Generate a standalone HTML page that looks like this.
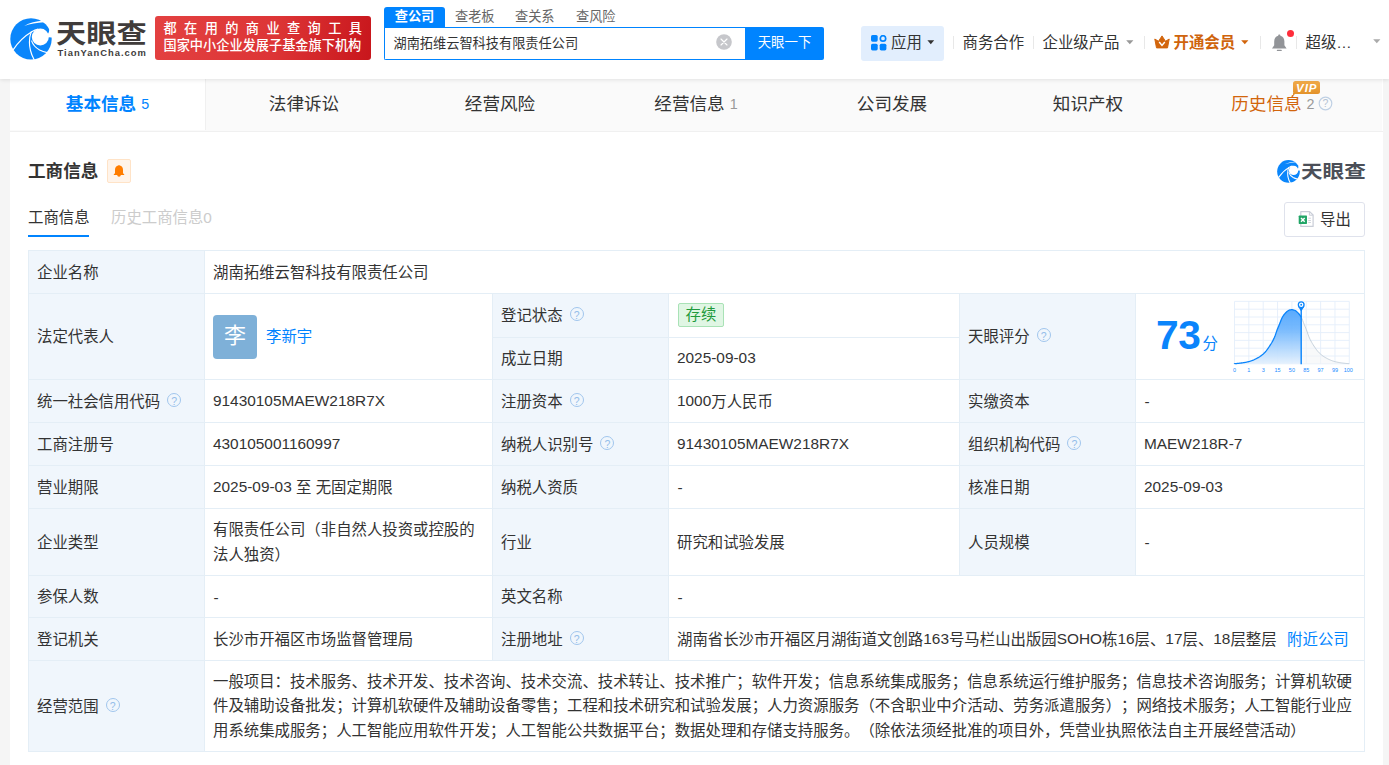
<!DOCTYPE html>
<html lang="zh-CN">
<head>
<meta charset="utf-8">
<title>湖南拓维云智科技有限责任公司 - 天眼查</title>
<style>
*{box-sizing:border-box;margin:0;padding:0}
html,body{width:1389px;height:765px;overflow:hidden}
body{text-spacing-trim:space-all;position:relative;background:#f5f5f5;color:#333;font-family:"Liberation Sans","Noto Sans CJK SC",sans-serif;font-size:15.4px}
.abs{position:absolute}
.t{position:absolute;white-space:nowrap;line-height:20px;height:20px;margin-top:.5px}
#header{position:absolute;left:0;top:0;width:1389px;height:79px;background:#fff;box-shadow:0 1px 4px rgba(0,0,0,.10);z-index:5}
#main{position:absolute;left:10px;top:79px;width:1373px;height:686px;background:#fff}
/* nav tabs */
#tabs{position:absolute;left:10px;top:79px;width:1372px;height:53px;background:#fafafa}
#tabs:after{content:"";position:absolute;left:0;top:52px;width:1373px;height:1px;background:#f0f0f0}
.tab{position:absolute;top:-1.3px;height:52px;width:196px;display:flex;align-items:center;justify-content:center;font-size:17.6px;color:#333;white-space:nowrap;line-height:24px}
.tab small{font-size:14.3px;color:#999;margin-left:5px;font-weight:normal}
.tab.on{background:#fff;color:#0084ff;font-weight:bold;border-right:1px solid #f0f0f0}
.tab.on small{color:#0084ff}
/* table cells */
.c{position:absolute;border-right:1px solid #e4eef6;border-bottom:1px solid #e4eef6;display:flex;align-items:center;padding:1px 8px 0 8px;line-height:24px;font-size:15.4px;color:#333;white-space:nowrap}
.c.l{background:#f0f6fc}
.q{display:inline-block;width:14px;height:14px;margin-left:7px;flex:none}
a{color:#0084ff;text-decoration:none}
.sep{position:absolute;top:36px;width:1px;height:13px;background:#e8e8e8}
.c{border:none;border-left:1px solid #e4eef6;border-top:1px solid #e4eef6}
.q{position:relative;top:-2px;display:inline-block;width:14px;height:14px;border:1.3px solid #a1c6ed;border-radius:50%;font-size:10.5px;line-height:14.4px;text-align:center;color:#94bdea;margin-left:7px;flex:none;font-family:"Liberation Sans",sans-serif}
.av{display:inline-block;width:44px;height:44px;border-radius:4px;background:#7eb0d8;color:#fff;font-size:22px;line-height:42px;text-align:center;flex:none}
.tag{position:relative;top:-1px;left:1px;display:inline-block;height:24px;line-height:22px;padding:0 6.6px;border:1px solid #a9e2b6;border-radius:2px;background:#e0f6e4;color:#1f9a3d;font-size:15.4px}
.c span.ml{line-height:24.2px;display:block}
.n{position:relative;top:-1px}
.w{display:block;white-space:nowrap}
.hy{position:relative;top:.5px;left:.6px}
</style>
</head>
<body>
<div id="main"></div>
<div id="header">
<!-- logo -->
<svg class="abs" style="left:10px;top:17.5px" width="42" height="42" viewBox="0 0 42 42">
<circle cx="21" cy="20.9" r="20.7" fill="#0a86fb"/>
<circle cx="30.3" cy="19" r="8.5" fill="#fff"/>
<path d="M39.5 10.2 Q39.4 14 37.3 17.3 L35.8 19.1 L41.8 19.4 L44.6 19 L44.6 10 Z" fill="#fff"/>
<path d="M3.1 31.8 C8 24.5 14.5 18 22.2 13.5 C24 12.4 26 11.7 28.2 11.2" fill="none" stroke="#fff" stroke-width="1.2"/>
<path d="M21.4 13.4 C19.1 19.5 19.1 27 20.5 32.5 C21.3 36 22.6 39 24.4 42.2" fill="none" stroke="#fff" stroke-width="1.15"/>
<path d="M21.5 22.6 C22.8 26.5 25.5 29.6 29.6 32 C32 33.3 34.5 34.1 37.2 34.6" fill="none" stroke="#fff" stroke-width="1.15"/>
<path d="M14.2 7.9 C19.5 5 26 3.3 33.5 2.6 L34.2 4.3 C27 4.6 20 6 14.2 7.9 Z" fill="#fff"/>
</svg>
<div class="abs" style="left:55.5px;top:14px;height:36px;line-height:36px;font-size:25.6px;font-weight:700;color:#403c3b;letter-spacing:0;font-family:'Noto Sans CJK SC',sans-serif;white-space:nowrap;transform:scaleX(1.18);transform-origin:0 0">天眼查</div>
<div class="abs" style="left:57.5px;top:46.5px;height:12px;line-height:12px;font-size:9.4px;font-weight:bold;color:#403c3b;letter-spacing:1px;white-space:nowrap">TianYanCha.com</div>
<!-- red banner -->
<div class="abs" style="left:155px;top:16px;width:216px;height:44px;border-radius:3px;background:linear-gradient(100deg,#e34141 0%,#dd3536 55%,#c8161c 100%);color:#fff;font-size:13.2px;white-space:nowrap">
<div class="abs" style="left:8.5px;top:4.5px;height:16px;line-height:16px;letter-spacing:7.4px;font-weight:500">都在用的商业查询工具</div>
<div class="abs" style="left:8.5px;top:22px;height:16px;line-height:16px;font-weight:500">国家中小企业发展子基金旗下机构</div>
</div>
<!-- search -->
<div class="abs" style="left:384px;top:7px;width:61px;height:20px;background:#0084ff;color:#fff;font-size:13.2px;font-weight:bold;line-height:19px;text-align:center;border-radius:3px 3px 0 0">查公司</div>
<div class="abs" style="left:455px;top:7px;height:20px;line-height:19px;font-size:13.2px;color:#666;white-space:nowrap">查老板</div>
<div class="abs" style="left:515px;top:7px;height:20px;line-height:19px;font-size:13.2px;color:#666;white-space:nowrap">查关系</div>
<div class="abs" style="left:576px;top:7px;height:20px;line-height:19px;font-size:13.2px;color:#666;white-space:nowrap">查风险</div>
<div class="abs" style="left:384px;top:27px;width:362px;height:33px;border:1px solid #0084ff;border-right:none;background:#fff;border-radius:0 0 0 2px"></div>
<div class="abs" style="left:393.5px;top:34px;height:20px;line-height:20px;font-size:13.2px;color:#333;white-space:nowrap">湖南拓维云智科技有限责任公司</div>
<svg class="abs" style="left:715.7px;top:34.2px" width="16" height="16" viewBox="0 0 16 16"><circle cx="8" cy="8" r="7.8" fill="#c6c7cb"/><path d="M5 5 L11 11 M11 5 L5 11" stroke="#fff" stroke-width="1.15" stroke-linecap="round"/></svg>
<div class="abs" style="left:745px;top:27px;width:79px;height:33px;background:#0084ff;color:#fff;font-size:13.4px;line-height:32px;text-align:center;border-radius:0 2px 2px 0">天眼一下</div>
<!-- right nav -->
<div class="abs" style="left:861px;top:26px;width:83px;height:34.5px;background:#e2eefd;border-radius:3px"></div>
<svg class="abs" style="left:870.5px;top:35px" width="16" height="16" viewBox="0 0 16 16"><rect x="0" y="0" width="6.7" height="6.7" rx="1.6" fill="#0084ff"/><rect x="0" y="8.7" width="6.7" height="6.7" rx="1.6" fill="#0084ff"/><rect x="8.7" y="8.7" width="6.7" height="6.7" rx="1.6" fill="#0084ff"/><circle cx="12" cy="3.4" r="2.7" fill="none" stroke="#0084ff" stroke-width="1.7"/></svg>
<div class="t" style="left:891px;top:32.5px">应用</div>
<svg class="abs" style="left:927px;top:40px" width="8" height="5" viewBox="0 0 8 5"><path d="M.4 .3 H7.2 L3.8 4.2 Z" fill="#333"/></svg>
<div class="sep" style="left:953px"></div>
<div class="t" style="left:962.5px;top:32.5px">商务合作</div>
<div class="sep" style="left:1033px"></div>
<div class="t" style="left:1042.5px;top:32.5px">企业级产品</div>
<svg class="abs" style="left:1125.5px;top:40px" width="8" height="5" viewBox="0 0 8 5"><path d="M.2 .3 H7.4 L3.8 4.2 Z" fill="#999"/></svg>
<div class="sep" style="left:1144px"></div>
<svg class="abs" style="left:1154px;top:34.6px" width="16" height="14" viewBox="0 0 16 14"><path d="M.8 4 L4.5 6.3 L8 .9 L11.5 6.3 L15.2 4 L13.5 12.9 H2.5 Z" fill="#d2650c" stroke="#d2650c" stroke-width="1" stroke-linejoin="round"/><path d="M5.2 7 L8 10.4 L10.8 7" fill="none" stroke="#fff" stroke-width="1.5"/></svg>
<div class="t" style="left:1173.5px;top:32.5px;font-weight:bold;color:#cf640d">开通会员</div>
<svg class="abs" style="left:1240.5px;top:40px" width="8" height="5" viewBox="0 0 8 5"><path d="M.2 .3 H7.4 L3.8 4.2 Z" fill="#d2650c"/></svg>
<div class="sep" style="left:1260px"></div>
<svg class="abs" style="left:1271px;top:33.5px" width="17" height="18" viewBox="0 0 17 18"><path d="M8.3 .6 C9 .6 9.4 1.1 9.4 1.8 C12 2.5 13.4 4.6 13.4 7.4 V11.2 L15.6 14.4 H1 L3.2 11.2 V7.4 C3.2 4.6 4.6 2.5 7.2 1.8 C7.2 1.1 7.6 .6 8.3 .6 Z" fill="#929498"/><rect x="5.8" y="15.8" width="5" height="1.3" rx=".6" fill="#929498"/></svg>
<div class="abs" style="left:1286.7px;top:29.8px;width:7.4px;height:7.4px;border-radius:50%;background:#ff2d3b"></div>
<div class="sep" style="left:1296px"></div>
<div class="t" style="left:1305.5px;top:32.5px">超级…</div>
<svg class="abs" style="left:1372.5px;top:39px" width="8" height="5" viewBox="0 0 8 5"><path d="M.2 .3 H7.4 L3.8 4.2 Z" fill="#aaa"/></svg>
</div>
<div id="tabs">
<div class="tab on" style="left:0;width:196px">基本信息<small>5</small></div>
<div class="tab" style="left:196px">法律诉讼</div>
<div class="tab" style="left:392px">经营风险</div>
<div class="tab" style="left:588px">经营信息<small>1</small></div>
<div class="tab" style="left:784px">公司发展</div>
<div class="tab" style="left:980px">知识产权</div>
<div class="tab" style="left:1174.2px;color:#d2650c">历史信息<small>2</small>
<svg style="margin-left:3.6px;position:relative;top:-.7px" width="15" height="15" viewBox="0 0 15 15"><circle cx="7.5" cy="7.5" r="6.3" fill="none" stroke="#bfd0e4" stroke-width="1.2"/><text x="7.5" y="11.2" font-size="10.5" text-anchor="middle" fill="#b4c2d4" font-family="Liberation Sans,sans-serif">?</text></svg>
</div>
<div class="abs" style="left:1283px;top:2px;width:27px;height:13px;border-radius:2.5px;background:linear-gradient(180deg,#f2ab4a,#e3922a);color:#fff;font-size:11.5px;font-weight:bold;font-style:italic;line-height:14.5px;text-align:center;letter-spacing:1px;text-indent:.5px">VIP</div>
<div class="abs" style="left:1283px;top:14px;width:0;height:0;border-left:0 solid transparent;border-right:3.5px solid transparent;border-top:3.5px solid #e3922a"></div>
</div>
<div id="content">
<div class="abs" style="left:28px;top:158px;height:26px;line-height:26px;font-size:17.6px;font-weight:bold;color:#333;white-space:nowrap">工商信息</div>
<div class="abs" style="left:107px;top:159px;width:24px;height:24px;border:1px solid #ffe3c7;border-radius:2px;background:#fff4ea"></div>
<svg class="abs" style="left:113px;top:164px" width="12" height="14" viewBox="0 0 12 14"><path d="M6 .9 C6.4 .9 6.6 1.2 6.7 1.6 C8.9 2 10 3.8 10 5.8 V9.2 L11.2 10.2 V10.9 H.8 V10.2 L2 9.2 V5.8 C2 3.8 3.1 2 5.3 1.6 C5.4 1.2 5.6 .9 6 .9 Z" fill="#ff7d00"/><path d="M4.2 10.8 H7.8 C7.8 12 7 12.8 6 12.8 C5 12.8 4.2 12 4.2 10.8 Z" fill="#ff7d00"/></svg>
<svg class="abs" style="left:1276.5px;top:160px" width="23" height="23" viewBox="0 0 42 42">
<circle cx="21" cy="20.9" r="20.7" fill="#0a86fb"/>
<circle cx="30.3" cy="19" r="8.5" fill="#fff"/>
<path d="M39.5 10.2 Q39.4 14 37.3 17.3 L35.8 19.1 L41.8 19.4 L44.6 19 L44.6 10 Z" fill="#fff"/>
<path d="M3.1 31.8 C8 24.5 14.5 18 22.2 13.5 C24 12.4 26 11.7 28.2 11.2" fill="none" stroke="#fff" stroke-width="2"/>
<path d="M21.4 13.4 C19.1 19.5 19.1 27 20.5 32.5 C21.3 36 22.6 39 24.4 42.2" fill="none" stroke="#fff" stroke-width="1.9"/>
<path d="M21.5 22.6 C22.8 26.5 25.5 29.6 29.6 32 C32 33.3 34.5 34.1 37.2 34.6" fill="none" stroke="#fff" stroke-width="1.9"/>
<path d="M14.2 7.9 C19.5 5 26 3.3 33.5 2.6 L34.2 4.3 C27 4.6 20 6 14.2 7.9 Z" fill="#fff"/>
</svg>
<div class="abs" style="left:1301px;top:156.3px;height:28px;line-height:28px;font-size:18.6px;font-weight:bold;color:#4b4f58;font-family:'Noto Sans CJK SC',sans-serif;white-space:nowrap;transform:scaleX(1.16);transform-origin:0 0">天眼查</div>
<div class="abs" style="left:28px;top:206px;height:24px;line-height:24px;font-size:15.4px;color:#333;white-space:nowrap">工商信息</div>
<div class="abs" style="left:28px;top:235px;width:61px;height:2px;background:#0084ff"></div>
<div class="abs" style="left:111px;top:206px;height:24px;line-height:24px;font-size:15.4px;color:#ccc;white-space:nowrap">历史工商信息0</div>
<div class="abs" style="left:1284px;top:202px;width:81px;height:35px;border:1px solid #dfe2ec;border-radius:3px;background:#fff"></div>
<svg class="abs" style="left:1298px;top:210px" width="17" height="18" viewBox="0 0 17 18"><path d="M2.8 1.6 H11.6 L15.1 5 V16.4 H2.8 Z" fill="#fff" stroke="#c9cdd7" stroke-width="1.2" stroke-linejoin="round"/><path d="M11.4 1.8 V5.2 H14.9" fill="none" stroke="#c9cdd7" stroke-width="1"/><rect x="10.3" y="7.7" width="2.6" height="1" fill="#cfd2da"/><rect x="10.3" y="10" width="2.6" height="1" fill="#cfd2da"/><rect x="10.3" y="12" width="2.6" height="1" fill="#cfd2da"/><rect x=".7" y="5.6" width="8.3" height="8.3" rx=".7" fill="#21a566"/><path d="M3 7.9 L6.7 11.7 M6.7 7.9 L3 11.7" stroke="#fff" stroke-width="1.4"/></svg>
<div class="abs" style="left:1320px;top:208px;height:24px;line-height:24px;font-size:15.4px;color:#333;white-space:nowrap">导出</div>
<div id="tbl">
<div class="c l" style="left:28px;top:250px;width:176px;height:43px;">企业名称</div>
<div class="c" style="left:204px;top:250px;width:1160px;height:43px;">湖南拓维云智科技有限责任公司</div>
<div class="c l" style="left:28px;top:293px;width:176px;height:86px;">法定代表人</div>
<div class="c" style="left:204px;top:293px;width:288px;height:86px;"><span class="av">李</span><a style="margin-left:9px">李新宇</a></div>
<div class="c l" style="left:492px;top:293px;width:176px;height:44px;">登记状态<span class="q">?</span></div>
<div class="c" style="left:668px;top:293px;width:291px;height:44px;"><span class="tag">存续</span></div>
<div class="c l" style="left:492px;top:337px;width:176px;height:42px;">成立日期</div>
<div class="c" style="left:668px;top:337px;width:291px;height:42px;"><span class="w"><span class="n">2025-09-03</span></span></div>
<div class="c l" style="left:959px;top:293px;width:176px;height:86px;">天眼评分<span class="q">?</span></div>
<div class="c" style="left:1135px;top:293px;width:229px;height:86px;"></div>
<div class="c l" style="left:28px;top:379px;width:176px;height:43px;">统一社会信用代码<span class="q">?</span></div>
<div class="c" style="left:204px;top:379px;width:288px;height:43px;"><span class="w"><span class="n">91430105MAEW218R7X</span></span></div>
<div class="c l" style="left:492px;top:379px;width:176px;height:43px;">注册资本<span class="q">?</span></div>
<div class="c" style="left:668px;top:379px;width:291px;height:43px;"><span class="w"><span class="n">1000</span>万人民币</span></div>
<div class="c l" style="left:959px;top:379px;width:176px;height:43px;">实缴资本</div>
<div class="c" style="left:1135px;top:379px;width:229px;height:43px;"><span class="hy">-</span></div>
<div class="c l" style="left:28px;top:422px;width:176px;height:43px;">工商注册号</div>
<div class="c" style="left:204px;top:422px;width:288px;height:43px;"><span class="w"><span class="n">430105001160997</span></span></div>
<div class="c l" style="left:492px;top:422px;width:176px;height:43px;">纳税人识别号<span class="q">?</span></div>
<div class="c" style="left:668px;top:422px;width:291px;height:43px;"><span class="w"><span class="n">91430105MAEW218R7X</span></span></div>
<div class="c l" style="left:959px;top:422px;width:176px;height:43px;">组织机构代码<span class="q">?</span></div>
<div class="c" style="left:1135px;top:422px;width:229px;height:43px;"><span class="w"><span class="n">MAEW218R-7</span></span></div>
<div class="c l" style="left:28px;top:465px;width:176px;height:43px;">营业期限</div>
<div class="c" style="left:204px;top:465px;width:288px;height:43px;"><span class="w"><span class="n">2025-09-03</span> 至 无固定期限</span></div>
<div class="c l" style="left:492px;top:465px;width:176px;height:43px;">纳税人资质</div>
<div class="c" style="left:668px;top:465px;width:291px;height:43px;"><span class="hy">-</span></div>
<div class="c l" style="left:959px;top:465px;width:176px;height:43px;">核准日期</div>
<div class="c" style="left:1135px;top:465px;width:229px;height:43px;"><span class="w"><span class="n">2025-09-03</span></span></div>
<div class="c l" style="left:28px;top:508px;width:176px;height:67px;">企业类型</div>
<div class="c" style="left:204px;top:508px;width:288px;height:67px;"><span class="ml">有限责任公司（非自然人投资或控股的<br>法人独资）</span></div>
<div class="c l" style="left:492px;top:508px;width:176px;height:67px;">行业</div>
<div class="c" style="left:668px;top:508px;width:291px;height:67px;">研究和试验发展</div>
<div class="c l" style="left:959px;top:508px;width:176px;height:67px;">人员规模</div>
<div class="c" style="left:1135px;top:508px;width:229px;height:67px;"><span class="hy">-</span></div>
<div class="c l" style="left:28px;top:575px;width:176px;height:42px;">参保人数</div>
<div class="c" style="left:204px;top:575px;width:288px;height:42px;"><span class="hy">-</span></div>
<div class="c l" style="left:492px;top:575px;width:176px;height:42px;">英文名称</div>
<div class="c" style="left:668px;top:575px;width:696px;height:42px;"><span class="hy">-</span></div>
<div class="c l" style="left:28px;top:617px;width:176px;height:43px;">登记机关</div>
<div class="c" style="left:204px;top:617px;width:288px;height:43px;">长沙市开福区市场监督管理局</div>
<div class="c l" style="left:492px;top:617px;width:176px;height:43px;">注册地址<span class="q">?</span></div>
<div class="c" style="left:668px;top:617px;width:696px;height:43px;"><span class="w">湖南省长沙市开福区月湖街道文创路<span class="n">163</span>号马栏山出版园<span class="n">SOHO</span>栋<span class="n">16</span>层、<span class="n">17</span>层、<span class="n">18</span>层整层<a style="margin-left:10.5px">附近公司</a></span></div>
<div class="c l" style="left:28px;top:660px;width:176px;height:91px;">经营范围<span class="q">?</span></div>
<div class="c" style="left:204px;top:660px;width:1160px;height:91px;"><span class="ml">一般项目：技术服务、技术开发、技术咨询、技术交流、技术转让、技术推广；软件开发；信息系统集成服务；信息系统运行维护服务；信息技术咨询服务；计算机软硬<br>件及辅助设备批发；计算机软硬件及辅助设备零售；工程和技术研究和试验发展；人力资源服务（不含职业中介活动、劳务派遣服务）；网络技术服务；人工智能行业应<br>用系统集成服务；人工智能应用软件开发；人工智能公共数据平台；数据处理和存储支持服务。（除依法须经批准的项目外，凭营业执照依法自主开展经营活动）</span></div>
<div class="abs" style="left:1364px;top:250px;width:1px;height:502px;background:#e4eef6"></div>
<div class="abs" style="left:28px;top:751px;width:1337px;height:1px;background:#e4eef6"></div>
</div>
<!--SCORE--><div class="abs" style="left:1156px;top:312px;height:46px;line-height:46px;font-size:40.7px;font-weight:bold;color:#0a84fb;white-space:nowrap;letter-spacing:-.3px">73</div>
<div class="abs" style="left:1202.5px;top:333px;height:22px;line-height:22px;font-size:15.4px;color:#0a84fb;white-space:nowrap">分</div>
<svg class="abs" style="left:1228px;top:296px" width="130" height="80" viewBox="0 0 130 80">
<defs><linearGradient id="gf" x1="0" y1="0" x2="0" y2="1"><stop offset="0" stop-color="#4ba3fd"/><stop offset=".35" stop-color="#6cb4fd"/><stop offset="1" stop-color="#e3f0fd"/></linearGradient></defs>
<path d="M6.50 5.40 V67.80 M6.50 5.40 H121.30 M20.85 5.40 V67.80 M6.50 13.20 H121.30 M35.20 5.40 V67.80 M6.50 21.00 H121.30 M49.55 5.40 V67.80 M6.50 28.80 H121.30 M63.90 5.40 V67.80 M6.50 36.60 H121.30 M78.25 5.40 V67.80 M6.50 44.40 H121.30 M92.60 5.40 V67.80 M6.50 52.20 H121.30 M106.95 5.40 V67.80 M6.50 60.00 H121.30 M121.30 5.40 V67.80 M6.50 67.80 H121.30" fill="none" stroke="#e4eefb" stroke-width=".9"/>
<path d="M73.20 21.12 L73.20 21.12 L73.95 22.65 L74.70 24.47 L75.45 26.42 L76.20 28.33 L76.95 30.14 L77.70 31.96 L78.45 33.86 L79.20 35.95 L79.95 38.17 L80.70 40.25 L81.45 42.00 L82.20 43.57 L82.95 45.03 L83.70 46.39 L84.45 47.66 L85.20 48.87 L85.95 50.02 L86.70 51.15 L87.45 52.24 L88.20 53.29 L88.95 54.28 L89.70 55.21 L90.45 56.07 L91.20 56.85 L91.95 57.56 L92.70 58.23 L93.45 58.85 L94.20 59.44 L94.95 60.00 L95.70 60.52 L96.45 61.00 L97.20 61.45 L97.95 61.88 L98.70 62.28 L99.45 62.68 L100.20 63.06 L100.95 63.42 L101.70 63.77 L102.45 64.10 L103.20 64.41 L103.95 64.70 L104.70 64.96 L105.45 65.20 L106.20 65.42 L106.95 65.62 L107.70 65.81 L108.45 65.98 L109.20 66.15 L109.95 66.30 L110.70 66.45 L111.45 66.58 L112.20 66.71 L112.95 66.82 L113.70 66.92 L114.45 67.02 L115.20 67.11 L115.95 67.20 L116.70 67.29 L117.45 67.37 L118.20 67.44 L118.95 67.51 L119.70 67.56 L120.45 67.60 L121.20 67.63 L121.30 67.64 L121.30 67.80 L73.20 67.80 Z" fill="#f3f4f6" fill-opacity=".55"/>
<path d="M73.20 21.12 L73.20 21.12 L73.95 22.65 L74.70 24.47 L75.45 26.42 L76.20 28.33 L76.95 30.14 L77.70 31.96 L78.45 33.86 L79.20 35.95 L79.95 38.17 L80.70 40.25 L81.45 42.00 L82.20 43.57 L82.95 45.03 L83.70 46.39 L84.45 47.66 L85.20 48.87 L85.95 50.02 L86.70 51.15 L87.45 52.24 L88.20 53.29 L88.95 54.28 L89.70 55.21 L90.45 56.07 L91.20 56.85 L91.95 57.56 L92.70 58.23 L93.45 58.85 L94.20 59.44 L94.95 60.00 L95.70 60.52 L96.45 61.00 L97.20 61.45 L97.95 61.88 L98.70 62.28 L99.45 62.68 L100.20 63.06 L100.95 63.42 L101.70 63.77 L102.45 64.10 L103.20 64.41 L103.95 64.70 L104.70 64.96 L105.45 65.20 L106.20 65.42 L106.95 65.62 L107.70 65.81 L108.45 65.98 L109.20 66.15 L109.95 66.30 L110.70 66.45 L111.45 66.58 L112.20 66.71 L112.95 66.82 L113.70 66.92 L114.45 67.02 L115.20 67.11 L115.95 67.20 L116.70 67.29 L117.45 67.37 L118.20 67.44 L118.95 67.51 L119.70 67.56 L120.45 67.60 L121.20 67.63 L121.30 67.64" fill="none" stroke="#b9c6d3" stroke-width=".8"/>
<path d="M6.50 67.80 L6.50 67.63 L7.25 67.60 L8.00 67.55 L8.75 67.50 L9.50 67.43 L10.25 67.36 L11.00 67.28 L11.75 67.19 L12.50 67.10 L13.25 67.00 L14.00 66.91 L14.75 66.81 L15.50 66.69 L16.25 66.57 L17.00 66.43 L17.75 66.28 L18.50 66.13 L19.25 65.96 L20.00 65.78 L20.75 65.59 L21.50 65.39 L22.25 65.17 L23.00 64.93 L23.75 64.66 L24.50 64.37 L25.25 64.05 L26.00 63.72 L26.75 63.37 L27.50 63.01 L28.25 62.62 L29.00 62.23 L29.75 61.82 L30.50 61.40 L31.25 60.94 L32.00 60.45 L32.75 59.92 L33.50 59.37 L34.25 58.77 L35.00 58.14 L35.75 57.47 L36.50 56.75 L37.25 55.96 L38.00 55.09 L38.75 54.15 L39.50 53.15 L40.25 52.10 L41.00 51.00 L41.75 49.87 L42.50 48.71 L43.25 47.50 L44.00 46.21 L44.75 44.84 L45.50 43.37 L46.25 41.78 L47.00 39.99 L47.75 37.87 L48.50 35.65 L49.25 33.60 L50.00 31.72 L50.75 29.90 L51.50 28.09 L52.25 26.16 L53.00 24.21 L53.75 22.42 L54.50 20.95 L55.25 19.77 L56.00 18.74 L56.75 17.83 L57.50 16.99 L58.25 16.22 L59.00 15.56 L59.75 14.97 L60.50 14.48 L61.25 14.20 L62.00 13.97 L62.75 13.80 L63.50 13.71 L64.25 13.72 L65.00 13.83 L65.75 14.01 L66.50 14.25 L67.25 14.56 L68.00 15.09 L68.75 15.69 L69.50 16.37 L70.25 17.15 L71.00 18.00 L71.75 18.94 L72.50 20.00 L73.20 21.12 L73.20 67.80 Z" fill="url(#gf)" fill-opacity=".92"/>
<path d="M6.50 67.80 L6.50 67.63 L7.25 67.60 L8.00 67.55 L8.75 67.50 L9.50 67.43 L10.25 67.36 L11.00 67.28 L11.75 67.19 L12.50 67.10 L13.25 67.00 L14.00 66.91 L14.75 66.81 L15.50 66.69 L16.25 66.57 L17.00 66.43 L17.75 66.28 L18.50 66.13 L19.25 65.96 L20.00 65.78 L20.75 65.59 L21.50 65.39 L22.25 65.17 L23.00 64.93 L23.75 64.66 L24.50 64.37 L25.25 64.05 L26.00 63.72 L26.75 63.37 L27.50 63.01 L28.25 62.62 L29.00 62.23 L29.75 61.82 L30.50 61.40 L31.25 60.94 L32.00 60.45 L32.75 59.92 L33.50 59.37 L34.25 58.77 L35.00 58.14 L35.75 57.47 L36.50 56.75 L37.25 55.96 L38.00 55.09 L38.75 54.15 L39.50 53.15 L40.25 52.10 L41.00 51.00 L41.75 49.87 L42.50 48.71 L43.25 47.50 L44.00 46.21 L44.75 44.84 L45.50 43.37 L46.25 41.78 L47.00 39.99 L47.75 37.87 L48.50 35.65 L49.25 33.60 L50.00 31.72 L50.75 29.90 L51.50 28.09 L52.25 26.16 L53.00 24.21 L53.75 22.42 L54.50 20.95 L55.25 19.77 L56.00 18.74 L56.75 17.83 L57.50 16.99 L58.25 16.22 L59.00 15.56 L59.75 14.97 L60.50 14.48 L61.25 14.20 L62.00 13.97 L62.75 13.80 L63.50 13.71 L64.25 13.72 L65.00 13.83 L65.75 14.01 L66.50 14.25 L67.25 14.56 L68.00 15.09 L68.75 15.69 L69.50 16.37 L70.25 17.15 L71.00 18.00 L71.75 18.94 L72.50 20.00 L73.20 21.12" fill="none" stroke="#0a84fb" stroke-width="1.3"/>
<path d="M73.20 12.50 V68.20" stroke="#0a84fb" stroke-width="1.4"/>
<path d="M70.10 10.40 L73.20 15.40 L76.30 10.40 Z" fill="#0a84fb"/>
<circle cx="73.20" cy="8.80" r="2.85" fill="#fff" stroke="#0a84fb" stroke-width="1.3"/>
<circle cx="73.20" cy="8.80" r="0.95" fill="#0a84fb"/>
<text x="6.50" y="75.70" font-size="5.5" text-anchor="middle" fill="#1a8cff" font-family="Liberation Sans,sans-serif">0</text>
<text x="20.85" y="75.70" font-size="5.5" text-anchor="middle" fill="#1a8cff" font-family="Liberation Sans,sans-serif">1</text>
<text x="35.20" y="75.70" font-size="5.5" text-anchor="middle" fill="#1a8cff" font-family="Liberation Sans,sans-serif">3</text>
<text x="49.55" y="75.70" font-size="5.5" text-anchor="middle" fill="#1a8cff" font-family="Liberation Sans,sans-serif">15</text>
<text x="63.90" y="75.70" font-size="5.5" text-anchor="middle" fill="#1a8cff" font-family="Liberation Sans,sans-serif">50</text>
<text x="78.25" y="75.70" font-size="5.5" text-anchor="middle" fill="#1a8cff" font-family="Liberation Sans,sans-serif">85</text>
<text x="92.60" y="75.70" font-size="5.5" text-anchor="middle" fill="#1a8cff" font-family="Liberation Sans,sans-serif">97</text>
<text x="106.95" y="75.70" font-size="5.5" text-anchor="middle" fill="#1a8cff" font-family="Liberation Sans,sans-serif">99</text>
<text x="120.30" y="75.70" font-size="5.5" text-anchor="middle" fill="#1a8cff" font-family="Liberation Sans,sans-serif">100</text>
</svg><!--/SCORE-->
</div>
</body>
</html>
